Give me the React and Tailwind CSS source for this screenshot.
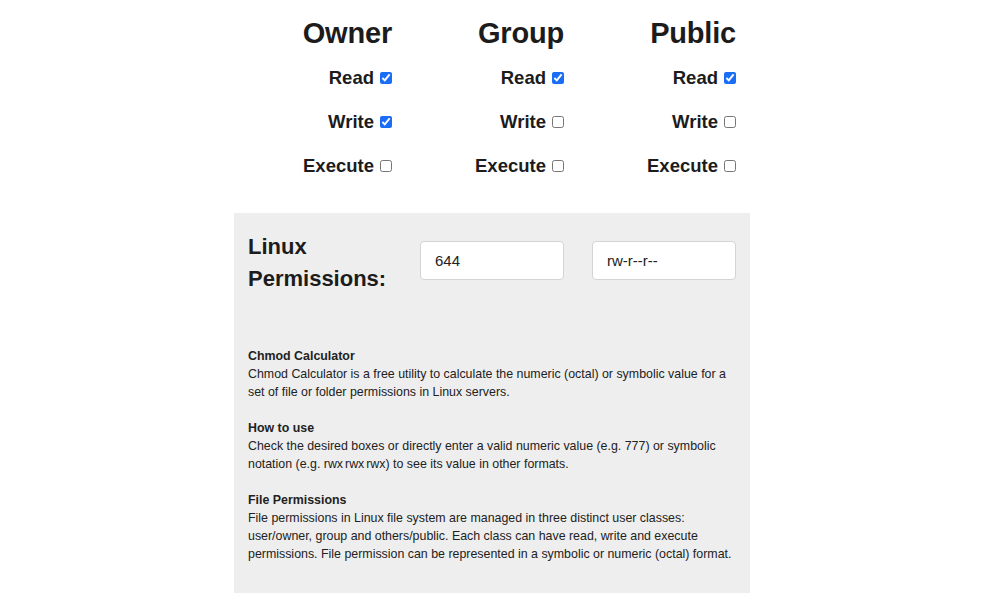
import { useState } from 'react';

const classes = [
  { name: 'Owner', perms: { read: true, write: true, execute: false } },
  { name: 'Group', perms: { read: true, write: false, execute: false } },
  { name: 'Public', perms: { read: true, write: false, execute: false } },
];

function PermColumn({ name, perms }) {
  return (
    <div className="w-[172px] shrink-0 flex flex-col items-end">
      <div className="h-[44px] flex items-center text-[29px] font-bold text-[#1c1c1c] tracking-[-0.2px]">
        {name}
      </div>
      {['Read', 'Write', 'Execute'].map((label) => (
        <label key={label} className="h-[44px] flex items-center gap-[6px] text-[18.5px] font-bold text-[#1c1c1c]">
          <span>{label}</span>
          <input
            type="checkbox"
            readOnly
            checked={perms[label.toLowerCase()]}
            className="w-[12px] h-[12px] m-0 accent-[#1a6ef5]"
          />
        </label>
      ))}
    </div>
  );
}

function App() {
  const [octal, setOctal] = useState('644');
  const [symbolic, setSymbolic] = useState('rw-r--r--');

  return (
    <div className="min-h-[613px] bg-white font-['Liberation_Sans',Arial,sans-serif]">
      <div className="w-[516px] ml-[234px]">
        {/* Checkbox grid */}
        <div className="flex justify-end pr-[14px] pt-[12px] pb-[25px]">
          {classes.map((c) => (
            <PermColumn key={c.name} name={c.name} perms={c.perms} />
          ))}
        </div>

        {/* Result panel */}
        <div className="bg-[#eeeeee] px-[14px] pt-[18px] pb-[30px]">
          <div className="flex items-start">
            <div className="flex-1 text-[22px] leading-[32px] font-bold text-[#1c1c1c]">
              Linux
              <br />
              Permissions:
            </div>
            <input
              value={octal}
              onChange={(e) => setOctal(e.target.value)}
              className="mt-[10px] w-[144px] h-[39px] bg-white border border-[#d4d4d4] rounded-[4px] px-[14px] text-[15px] text-[#222] outline-none"
            />
            <input
              value={symbolic}
              onChange={(e) => setSymbolic(e.target.value)}
              className="mt-[10px] ml-[28px] w-[144px] h-[39px] bg-white border border-[#d4d4d4] rounded-[4px] px-[14px] text-[15px] text-[#222] outline-none"
            />
          </div>

          {/* Info text */}
          <div className="mt-[52px] text-[12.4px] leading-[18px] text-[#222] space-y-[18px] pr-[4px]">
            <div>
              <div className="font-bold">Chmod Calculator</div>
              <p>
                Chmod Calculator is a free utility to calculate the numeric (octal) or symbolic value for a set of
                file or folder permissions in Linux servers.
              </p>
            </div>
            <div>
              <div className="font-bold">How to use</div>
              <p>
                Check the desired boxes or directly enter a valid numeric value (e.g. 777) or symbolic notation (e.g.{' '}
                <code className="font-['Liberation_Sans',Arial,sans-serif] whitespace-nowrap [word-spacing:-1.5px]">
                  rwx rwx rwx
                </code>
                ) to see its value in other formats.
              </p>
            </div>
            <div>
              <div className="font-bold">File Permissions</div>
              <p>
                File permissions in Linux file system are managed in three distinct user classes: user/owner, group
                and others/public. Each class can have read, write and execute permissions. File permission can be
                represented in a symbolic or numeric (octal) format.
              </p>
            </div>
          </div>
        </div>
      </div>
    </div>
  );
}

export default App;
